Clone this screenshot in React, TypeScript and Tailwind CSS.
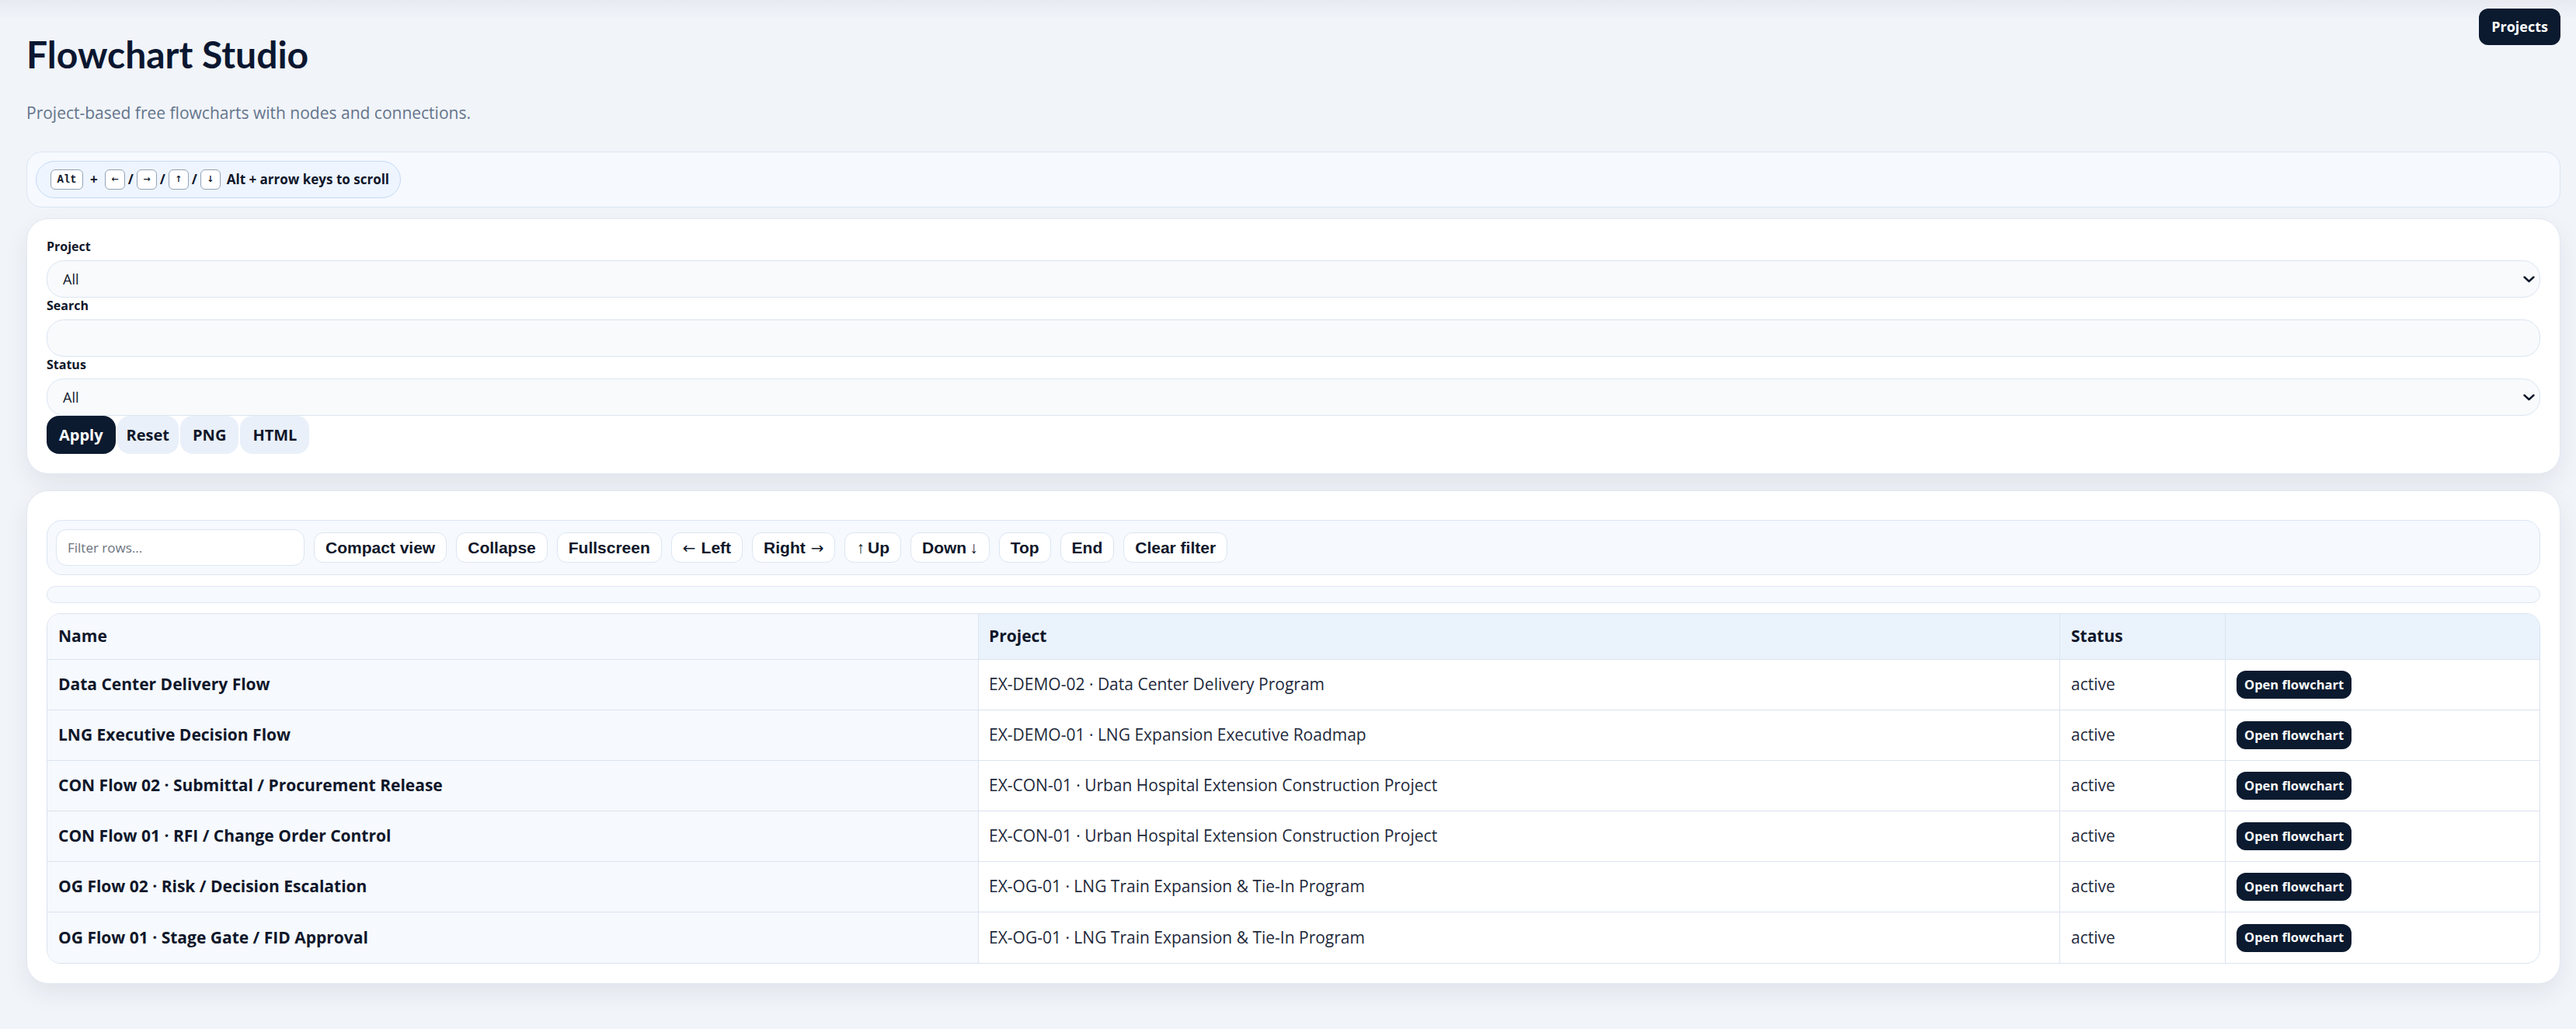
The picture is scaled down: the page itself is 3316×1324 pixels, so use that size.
import React from "react";

const rows = [
  { name: "Data Center Delivery Flow", project: "EX-DEMO-02 · Data Center Delivery Program" },
  { name: "LNG Executive Decision Flow", project: "EX-DEMO-01 · LNG Expansion Executive Roadmap" },
  { name: "CON Flow 02 · Submittal / Procurement Release", project: "EX-CON-01 · Urban Hospital Extension Construction Project" },
  { name: "CON Flow 01 · RFI / Change Order Control", project: "EX-CON-01 · Urban Hospital Extension Construction Project" },
  { name: "OG Flow 02 · Risk / Decision Escalation", project: "EX-OG-01 · LNG Train Expansion & Tie-In Program" },
  { name: "OG Flow 01 · Stage Gate / FID Approval", project: "EX-OG-01 · LNG Train Expansion & Tie-In Program" },
];

// label + optional arrow; arrows are drawn in a thinner face like the reference
const toolButtons: { label: string; arrow?: string; arrowFirst?: boolean; vertical?: boolean }[] = [
  { label: "Compact view" },
  { label: "Collapse" },
  { label: "Fullscreen" },
  { label: "Left", arrow: "←", arrowFirst: true },
  { label: "Right", arrow: "→" },
  { label: "Up", arrow: "↑", arrowFirst: true, vertical: true },
  { label: "Down", arrow: "↓", vertical: true },
  { label: "Top" },
  { label: "End" },
  { label: "Clear filter" },
];

function Chevron() {
  return (
    <svg width="15" height="9" viewBox="0 0 15 9" fill="none">
      <path d="M1.5 1.5 L7.5 7 L13.5 1.5" stroke="#0f172a" strokeWidth="2.4" strokeLinecap="round" strokeLinejoin="round" />
    </svg>
  );
}

function Key({ children, wide }: { children: React.ReactNode; wide?: boolean }) {
  return (
    <span
      className={
        wide
          ? "inline-flex h-[26px] w-[42px] items-center justify-center rounded-[6px] border border-[#94a3b8] bg-white font-['Liberation_Mono',monospace] text-[14px] text-[#0f172a]"
          : "inline-flex h-[26px] w-[26px] items-center justify-center rounded-[6px] border border-[#94a3b8] bg-white font-['DejaVu_Sans',sans-serif] text-[11px] text-[#0f172a]"
      }
    >
      {children}
    </span>
  );
}

function FakeSelect({ value }: { value: string }) {
  return (
    <div className="flex h-[48px] items-center justify-between rounded-[22px] border border-[#dce5f1] bg-[#f8fafc] pl-[20px] pr-[6px] text-[18px] text-[#0f172a]">
      <span>{value}</span>
      <Chevron />
    </div>
  );
}

function Arrow({ glyph, vertical }: { glyph: string; vertical?: boolean }) {
  return vertical ? (
    <span className="font-['Liberation_Sans',Arial,sans-serif] text-[21px] font-normal leading-none">{glyph}</span>
  ) : (
    <span className="font-['DejaVu_Sans',sans-serif] text-[20px] font-normal leading-none">{glyph}</span>
  );
}

export default function App() {
  return (
    <main className="relative min-h-screen bg-[#f1f4f9] font-['Open_Sans','Noto_Sans',sans-serif] text-[#0f172a]">
      {/* top shade */}
      <div className="pointer-events-none absolute inset-x-0 top-0 h-[26px] bg-gradient-to-b from-[#e7eaf0] to-transparent" />

      {/* nav button */}
      <button className="absolute right-[20px] top-[11px] h-[47px] rounded-[12px] bg-[#0b1a2f] px-[16px] text-[18px] font-bold text-white">
        Projects
      </button>

      <div className="pl-[34px] pr-[20px] pt-[41px] pb-[60px]">
        <h1 className="font-['Lato',sans-serif] text-[48px] font-bold leading-[58px] text-[#0b1730]">Flowchart Studio</h1>
        <p className="mt-[31px] text-[21px] leading-[30px] text-[#64748b]">
          Project-based free flowcharts with nodes and connections.
        </p>

        {/* shortcut hint */}
        <div className="mt-[35px] flex h-[72px] items-center rounded-[20px] border border-[#dbe6f3] bg-[#f6f9fe] px-[11px]">
          <div className="flex h-[48px] items-center rounded-full border border-[#c5daf6] bg-[#eef5ff] pl-[18px] pr-[14px] text-[17px] font-bold">
            <Key wide>Alt</Key>
            <span className="mx-[9px]">+</span>
            <Key>←</Key>
            <span className="w-[15px] text-center">/</span>
            <Key>→</Key>
            <span className="w-[15px] text-center">/</span>
            <Key>↑</Key>
            <span className="w-[15px] text-center">/</span>
            <Key>↓</Key>
            <span className="ml-[8px]">Alt + arrow keys to scroll</span>
          </div>
        </div>

        {/* filters */}
        <section className="mt-[14px] rounded-[28px] border border-[#e1e8f2] bg-white px-[25px] pt-[25px] pb-[25px] shadow-[0_12px_32px_rgba(15,23,42,0.07)]">
          <label className="mb-[8px] block h-[20px] text-[16px] font-bold leading-[20px]">Project</label>
          <FakeSelect value="All" />
          <label className="mb-[8px] block h-[20px] text-[16px] font-bold leading-[20px]">Search</label>
          <div className="h-[48px] rounded-[22px] border border-[#dce5f1] bg-[#f8fafc]" />
          <label className="mb-[8px] block h-[20px] text-[16px] font-bold leading-[20px]">Status</label>
          <FakeSelect value="All" />
          <div className="flex gap-[2px]">
            <button className="h-[49px] rounded-[16px] bg-[#0b1a2f] px-[16px] text-[20px] font-bold text-white">Apply</button>
            <button className="h-[49px] rounded-[16px] bg-[#e9f0fa] px-[12px] text-[20px] font-bold">Reset</button>
            <button className="h-[49px] rounded-[16px] bg-[#e9f0fa] px-[16px] text-[20px] font-bold">PNG</button>
            <button className="h-[49px] rounded-[16px] bg-[#e9f0fa] px-[16px] text-[20px] font-bold">HTML</button>
          </div>
        </section>

        {/* list */}
        <section className="mt-[21px] rounded-[28px] border border-[#e1e8f2] bg-white px-[25px] pt-[37px] pb-[25px] shadow-[0_12px_32px_rgba(15,23,42,0.07)]">
          <div className="flex items-center gap-[12px] rounded-[20px] border border-[#dbe6f3] bg-[#f6f9fe] px-[11px] py-[11px]">
            <input
              placeholder="Filter rows..."
              className="h-[47px] w-[320px] rounded-[14px] border border-[#dbe6f3] bg-white px-[14px] text-[17px] outline-none placeholder:text-[#6b7280]"
            />
            {toolButtons.map((b) => (
              <button
                key={b.label}
                className={
                  (b.vertical ? "gap-[4px] " : "gap-[7px] ") +
                  "flex h-[39px] items-center rounded-[12px] border border-[#dbe6f3] bg-white px-[14px] font-['Liberation_Sans',Arial,sans-serif] text-[21px] font-bold text-[#0f172a]"
                }
              >
                {b.arrow && b.arrowFirst && <Arrow glyph={b.arrow} vertical={b.vertical} />}
                <span>{b.label}</span>
                {b.arrow && !b.arrowFirst && <Arrow glyph={b.arrow} vertical={b.vertical} />}
              </button>
            ))}
          </div>

          <div className="mt-[14px] h-[22px] rounded-full border border-[#dbe6f3] bg-[#f6f9fe]" />

          <div className="mt-[13px] overflow-hidden rounded-[18px] border border-[#d9e3ef]">
            <table className="w-full table-fixed border-separate border-spacing-0 text-left text-[21px]">
              <colgroup>
                <col className="w-[1198px]" />
                <col className="w-[1392px]" />
                <col className="w-[213px]" />
                <col />
              </colgroup>
              <thead>
                <tr>
                  <th className="h-[59px] border-b border-[#dbe4f0] bg-[#f6f9fe] px-[14px] font-bold">Name</th>
                  <th className="h-[59px] border-b border-l border-[#dbe4f0] bg-[#eaf2fc] px-[13px] font-bold">Project</th>
                  <th className="h-[59px] border-b border-l border-[#dbe4f0] bg-[#eaf2fc] px-[14px] font-bold">Status</th>
                  <th className="h-[59px] border-b border-l border-[#dbe4f0] bg-[#eaf2fc] px-[14px]" />
                </tr>
              </thead>
              <tbody>
                {rows.map((r, i) => {
                  const last = i === rows.length - 1;
                  return (
                    <tr key={r.name}>
                      <td className={(last ? "" : "border-b ") + "h-[65px] border-[#dbe4f0] bg-[#f6f9fe] px-[14px] font-bold"}>{r.name}</td>
                      <td className={(last ? "" : "border-b ") + "h-[65px] border-l border-[#dbe4f0] px-[13px] text-[#1e293b]"}>{r.project}</td>
                      <td className={(last ? "" : "border-b ") + "h-[65px] border-l border-[#dbe4f0] px-[14px] text-[#1e293b]"}>active</td>
                      <td className={(last ? "" : "border-b ") + "h-[65px] border-l border-[#dbe4f0] px-[14px]"}>
                        <button className="h-[36px] rounded-[12px] bg-[#0b1a2f] px-[10px] text-[16.5px] font-bold text-white">
                          Open flowchart
                        </button>
                      </td>
                    </tr>
                  );
                })}
              </tbody>
            </table>
          </div>
        </section>
      </div>
    </main>
  );
}
